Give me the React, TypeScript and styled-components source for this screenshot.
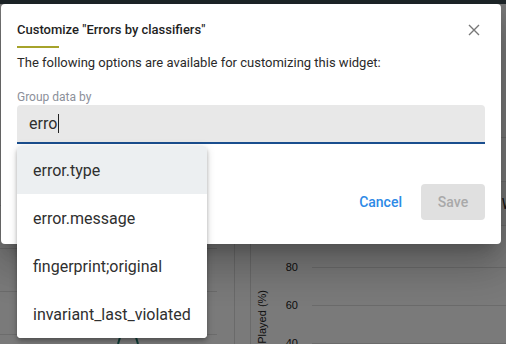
import React from "react";
import styled, { createGlobalStyle } from "styled-components";

const GlobalStyle = createGlobalStyle`
  html, body {
    margin: 0;
    padding: 0;
    width: 506px;
    height: 344px;
    overflow: hidden;
    font-family: Roboto, "Liberation Sans", sans-serif;
  }
`;

const OPTIONS = ["error.type", "error.message", "fingerprint;original", "invariant_last_violated"];

const TICKS = [
  { v: 80, y: 37 },
  { v: 60, y: 75 },
  { v: 40, y: 113 },
];

export default function App() {
  return (
    <>
      <GlobalStyle />
      <Page>
        <TopBar />
        <Dashboard>
          <LeftPanel>
            <Rows>
              {[0, 1, 2, 3, 4].map((i) => (
                <TableRow key={i} />
              ))}
            </Rows>
            <Spark viewBox="0 0 40 12" width={40} height={12}>
              <path d="M3 12 L6 2" stroke="#1d7a70" strokeWidth="2" fill="none" />
              <path d="M20 2 L23 12" stroke="#1d7a70" strokeWidth="2" fill="none" />
            </Spark>
          </LeftPanel>
          <RightPanel>
            <StatRows>
              <StatRow />
              <StatRow $shaded>
                <StatText>Weekly</StatText>
              </StatRow>
            </StatRows>
            <Chart width={255} height={130} viewBox="0 0 255 130">
              <text
                transform="translate(15 60) rotate(-90)"
                fontSize="11"
                fill="#222"
                fontFamily="Liberation Sans, Arial, sans-serif"
                textAnchor="end"
              >
                SessionsPlayed (%)
              </text>
              {TICKS.map((t) => (
                <g key={t.v}>
                  <text
                    x={47}
                    y={t.y + 4}
                    fontSize="11"
                    fill="#222"
                    fontFamily="Liberation Sans, Arial, sans-serif"
                    textAnchor="end"
                  >
                    {t.v}
                  </text>
                  <line x1={61} x2={255} y1={t.y + 0.5} y2={t.y + 0.5} stroke="#d6d6d6" />
                </g>
              ))}
            </Chart>
          </RightPanel>
        </Dashboard>
        <Backdrop />
        <Dialog>
          <Header>
            <Title>Customize "Errors by classifiers"</Title>
            <CloseButton aria-label="close">
              <svg width="12" height="12" viewBox="0 0 12 12">
                <path d="M1 1 L11 11 M11 1 L1 11" stroke="#777" strokeWidth="1.4" />
              </svg>
            </CloseButton>
          </Header>
          <TitleRule />
          <Description>The following options are available for customizing this widget:</Description>
          <Field>
            <Label>Group data by</Label>
            <Input>
              erro
              <Caret />
            </Input>
            <Menu>
              {OPTIONS.map((o, i) => (
                <MenuItem key={o} $active={i === 0}>
                  {o}
                </MenuItem>
              ))}
            </Menu>
          </Field>
          <Actions>
            <TextButton>Cancel</TextButton>
            <SaveButton disabled>Save</SaveButton>
          </Actions>
        </Dialog>
      </Page>
    </>
  );
}

const Page = styled.div`
  position: relative;
  width: 506px;
  height: 344px;
  background: #f4f4f4;
  overflow: hidden;
`;

const TopBar = styled.div`
  height: 4px;
  background: #3d4c53;
`;

const Dashboard = styled.div`
  display: grid;
  grid-template-columns: 235px 1fr;
  column-gap: 15px;
  height: 340px;
`;

const LeftPanel = styled.div`
  position: relative;
  border-right: 1px solid #d4d4d4;
  padding-right: 17px;
`;

const Rows = styled.div`
  display: flex;
  flex-direction: column;
  padding-top: 159px;
`;

const TableRow = styled.div`
  height: 42px;
  border-bottom: 1px solid #d8d8d8;
`;

const Spark = styled.svg`
  position: absolute;
  left: 115px;
  top: 328px;
`;

const RightPanel = styled.div`
  border-left: 1px solid #d4d4d4;
  display: flex;
  flex-direction: column;
`;

const StatRows = styled.div`
  display: flex;
  flex-direction: column;
  padding-top: 133px;
`;

const StatRow = styled.div<{ $shaded?: boolean }>`
  height: 43px;
  border-top: 1px solid #d8d8d8;
  background: ${(p) => (p.$shaded ? "#ececec" : "transparent")};
  display: flex;
  align-items: center;
  justify-content: flex-end;
  &:last-child {
    border-bottom: 1px solid #d8d8d8;
  }
`;

const StatText = styled.span`
  font-size: 14px;
  color: #222;
  margin-right: -40px;
`;

const Chart = styled.svg`
  display: block;
  margin-top: 4px;
`;

const Backdrop = styled.div`
  position: absolute;
  inset: 0;
  background: rgba(0, 0, 0, 0.5);
`;

const Dialog = styled.div`
  position: absolute;
  left: 1px;
  top: 4px;
  width: 500px;
  box-sizing: border-box;
  padding: 16px 16px 24px 16px;
  background: #fff;
  border-radius: 4px;
  box-shadow: 0 11px 15px -7px rgba(0, 0, 0, 0.2), 0 24px 38px 3px rgba(0, 0, 0, 0.14),
    0 9px 46px 8px rgba(0, 0, 0, 0.12);
`;

const Header = styled.div`
  display: flex;
  align-items: center;
  justify-content: space-between;
  height: 20px;
`;

const Title = styled.h2`
  margin: 0;
  font-size: 13px;
  line-height: 20px;
  font-weight: 500;
  color: #1f1f1f;
`;

const CloseButton = styled.button`
  display: flex;
  align-items: center;
  justify-content: center;
  border: 0;
  background: none;
  padding: 0;
  margin-right: 3px;
  width: 16px;
  height: 16px;
`;

const TitleRule = styled.div`
  width: 42px;
  height: 2px;
  margin-top: 6px;
  background: #a6a32b;
`;

const Description = styled.p`
  margin: 6px 0 0;
  font-size: 13px;
  line-height: 18px;
  color: #2a2a2a;
`;

const Field = styled.div`
  position: relative;
  margin-top: 17px;
`;

const Label = styled.div`
  font-size: 12px;
  line-height: 16px;
  color: #8c909a;
`;

const Input = styled.div`
  display: flex;
  align-items: center;
  height: 37px;
  padding-left: 12px;
  background: #e8e8e8;
  border-radius: 4px 4px 0 0;
  border-bottom: 2px solid #1a4e8e;
  font-size: 16px;
  color: #2f2f2f;
`;

const Caret = styled.span`
  display: inline-block;
  width: 1px;
  height: 19px;
  background: #222;
  margin-left: 1px;
`;

const Menu = styled.ul`
  position: absolute;
  left: 0;
  top: calc(100% + 2px);
  z-index: 2;
  width: 190px;
  margin: 0;
  padding: 0;
  list-style: none;
  background: #fff;
  border-radius: 4px;
  overflow: hidden;
  box-shadow: 0 2px 4px -1px rgba(0, 0, 0, 0.2), 0 4px 5px 0 rgba(0, 0, 0, 0.14),
    0 1px 10px 0 rgba(0, 0, 0, 0.12);
`;

const MenuItem = styled.li<{ $active?: boolean }>`
  height: 48px;
  display: flex;
  align-items: center;
  padding-left: 16px;
  font-size: 16px;
  color: #2f2f2f;
  background: ${(p) => (p.$active ? "#eceff1" : "#fff")};
`;

const Actions = styled.div`
  display: flex;
  justify-content: flex-end;
  align-items: center;
  gap: 8px;
  margin-top: 40px;
`;

const TextButton = styled.button`
  border: 0;
  background: none;
  height: 36px;
  padding: 0 11px;
  font-family: inherit;
  font-size: 14px;
  font-weight: 500;
  color: #2d8ae6;
`;

const SaveButton = styled.button`
  border: 0;
  height: 36px;
  width: 64px;
  border-radius: 4px;
  background: #e0e0e0;
  font-family: inherit;
  font-size: 14px;
  font-weight: 500;
  color: #a9a9a9;
`;
